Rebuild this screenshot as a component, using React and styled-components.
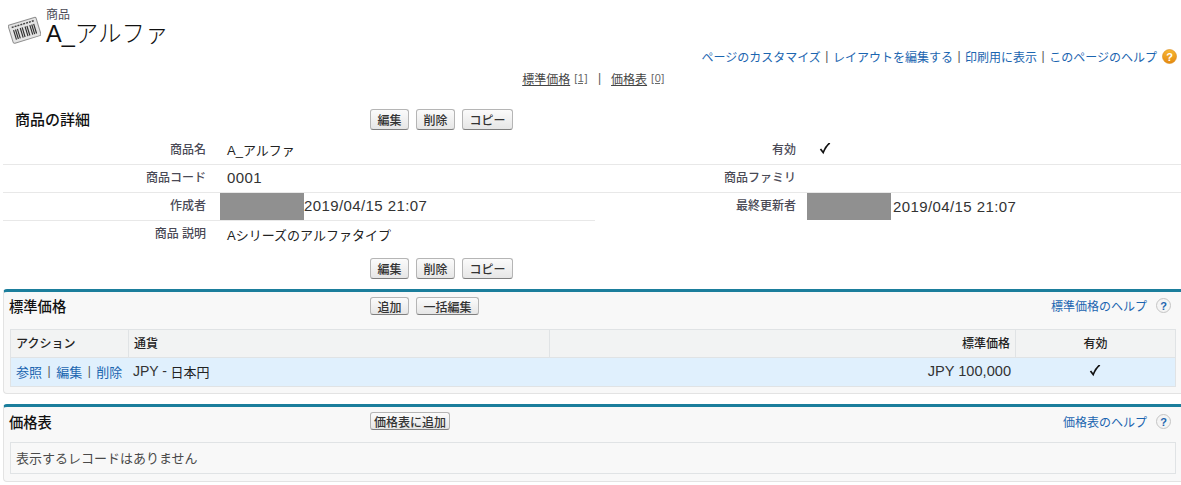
import React from "react";
import styled, { createGlobalStyle } from "styled-components";

const FONT = `"Liberation Sans", "Noto Sans CJK JP", sans-serif`;

const Global = createGlobalStyle`
  html, body {
    margin: 0;
    background: #fff;
    font-family: ${FONT};
    font-size: 12px;
    color: #222;
  }
`;

const Page = styled.div`
  width: 1181px;
  height: 485px;
  overflow: hidden;
`;

const PageHeader = styled.div`
  display: flex;
  justify-content: space-between;
  align-items: flex-start;
  height: 69px;
`;

const TitleBlock = styled.div`
  display: flex;
  padding: 8px 0 0 8px;
`;

const TitleText = styled.div`
  margin-left: 5px;
`;

const Crumb = styled.div`
  font-size: 12px;
  line-height: 14px;
  color: #4a4a56;
`;

const BigTitle = styled.div`
  font-size: 23.5px;
  line-height: 25px;
  font-weight: 300;
  color: #111;
`;

const TopLinks = styled.div`
  display: flex;
  align-items: center;
  margin-top: 47px;
  padding-right: 4px;
  height: 18px;
`;

const A = styled.span`
  color: ${(p) => (p.$plain ? "#444" : "#1b65b0")};
  font-size: ${(p) => p.$size || 12}px;
  white-space: nowrap;
  text-decoration: ${(p) => (p.$line ? "underline" : "none")};
`;

const Pipe = styled.span`
  color: #555;
  margin: 0 ${(p) => p.$gap || 4.5}px;
  font-size: 12px;
`;

const JumpLinks = styled.div`
  display: flex;
  justify-content: center;
  align-items: center;
  height: 18px;
  padding-left: 6px;
  margin-bottom: 22px;
`;

const JumpCount = styled.span`
  font-size: 11px;
  margin-left: 4px;
  letter-spacing: 0.5px;
  color: #666;
  text-decoration: underline;
`;

const Detail = styled.div`
  margin-left: 3px;
`;

const ButtonRow = styled.div`
  display: flex;
  align-items: flex-start;
  box-sizing: border-box;
  height: ${(p) => p.$h}px;
  padding-top: ${(p) => p.$pt || 0}px;
`;

const DetailTitle = styled.div`
  width: 367px;
  padding-left: 12px;
  box-sizing: border-box;
  font-size: 15px;
  line-height: 21px;
  font-weight: 500;
  color: #111;
`;

const Buttons = styled.div`
  display: flex;
  gap: ${(p) => p.$gap || 7}px;
  padding-left: ${(p) => p.$left || 0}px;
`;

const Btn = styled.button`
  box-sizing: border-box;
  height: ${(p) => p.$h || 21}px;
  width: ${(p) => p.$w}px;
  padding: 0;
  font-family: ${FONT};
  font-size: 12px;
  font-weight: 500;
  color: #333;
  background: linear-gradient(#fbfbfb, #e6e6e6);
  border: 1px solid #b5b5b5;
  border-bottom-color: #7f7f7f;
  border-radius: 3px;
`;

const Row = styled.div`
  display: grid;
  grid-template-columns: 592px 586px;
`;

const Cell = styled.div`
  display: flex;
  align-items: center;
  height: 28px;
  box-sizing: border-box;
  border-bottom: ${(p) => (p.$noline ? "none" : "1px solid #e8e8e8")};
`;

const Label = styled.div`
  width: ${(p) => p.$w}px;
  padding-bottom: 5px;
  text-align: right;
  font-size: 12px;
  font-weight: 500;
  color: #4a4a56;
`;

const Value = styled.div`
  display: flex;
  align-items: center;
  box-sizing: border-box;
  height: 100%;
  padding-left: ${(p) => p.$pad}px;
  padding-bottom: 2px;
  font-size: 13px;
  color: #222;
`;

const Num = styled.span`
  font-size: ${(p) => p.$size || 15}px;
  letter-spacing: ${(p) => p.$spacing || 0}px;
  color: #333;
`;

const Redact = styled.div`
  align-self: flex-start;
  width: 84px;
  height: 27px;
  background: #909090;
  margin-left: ${(p) => p.$ml}px;
  margin-right: ${(p) => p.$mr || 0}px;
`;

const Panel = styled.div`
  box-sizing: border-box;
  margin-left: 3px;
  height: ${(p) => p.$h}px;
  margin-top: ${(p) => p.$top}px;
  background: #f8f8f8;
  border-top: 3px solid #1b7e9c;
  border-left: 1px solid #e3e3e3;
  border-bottom: 1px solid #e3e3e3;
  border-radius: 4px 0 0 4px;
  padding-left: 6px;
`;

const PanelHead = styled.div`
  display: flex;
  align-items: center;
  height: ${(p) => p.$h}px;
  margin-left: -1px;
  margin-bottom: ${(p) => p.$mb}px;
`;

const PanelTitle = styled.div`
  width: 361px;
  font-size: 14.3px;
  font-weight: 500;
  color: #111;
`;

const HelpLink = styled.div`
  margin-left: auto;
  display: flex;
  align-items: center;
  padding-right: 10px;
`;

const Grid = styled.div`
  box-sizing: border-box;
  width: 1166px;
  border: 1px solid #e0e3e5;
`;

const HeadRow = styled.div`
  display: grid;
  grid-template-columns: 118px 421px 466px 1fr;
  height: 27px;
  background: #f2f3f3;
  border-bottom: 1px solid #e0e3e5;
`;

const Th = styled.div`
  display: flex;
  align-items: center;
  justify-content: ${(p) => p.$align || "flex-start"};
  padding: 0 5px 2px;
  font-size: 12px;
  font-weight: 500;
  color: #222;
  box-sizing: border-box;
  border-right: ${(p) => (p.$last ? "none" : "1px solid #e0e3e5")};
`;

const BodyRow = styled.div`
  display: grid;
  grid-template-columns: 118px 421px 466px 1fr;
  height: 28px;
  background: #e0f0fd;
`;

const Td = styled.div`
  display: flex;
  align-items: center;
  justify-content: ${(p) => p.$align || "flex-start"};
  padding: 0 5px 2px ${(p) => p.$left || 5}px;
  font-size: 13px;
  white-space: nowrap;
  box-sizing: border-box;
`;

const Empty = styled.div`
  box-sizing: border-box;
  width: 1166px;
  height: 32px;
  line-height: 31px;
  padding-left: 5px;
  border: 1px solid #e0e3e5;
  font-size: 13px;
  color: #4a4a4a;
`;

const Barcode = () => (
  <svg width="33" height="28" viewBox="0 0 33 28" style={{ marginTop: 8 }}>
    <g transform="rotate(-17 16 14)">
      <rect x="2" y="5" width="29" height="19" rx="1.5" fill="#e4e4e4" stroke="#8f8f8f" />
      <path d="M5 8h23" stroke="#444" strokeWidth="1.5" strokeDasharray="2 1" />
      <path
        d="M6 11v10M8 11v10M10 11v10M13 11v10M15 11v10M18 11v10M20 11v10M23 11v10M25 11v10M27 11v10"
        stroke="#333"
        strokeWidth="1.2"
      />
    </g>
  </svg>
);

const HelpOrange = () => (
  <svg width="15" height="15" viewBox="0 0 15 15" style={{ marginLeft: 5 }}>
    <defs>
      <linearGradient id="orangeFill" x1="0" y1="0" x2="0" y2="1">
        <stop offset="0" stopColor="#f7b733" />
        <stop offset="1" stopColor="#e58a10" />
      </linearGradient>
    </defs>
    <circle cx="7.5" cy="7.5" r="7" fill="url(#orangeFill)" stroke="#d98a1a" strokeWidth="0.6" />
    <text x="7.5" y="11.5" textAnchor="middle" fontSize="11" fontWeight="700" fill="#fff" fontFamily="Liberation Sans">?</text>
  </svg>
);

const HelpGray = () => (
  <svg width="15" height="15" viewBox="0 0 15 15" style={{ marginLeft: 9 }}>
    <circle cx="7.5" cy="7.5" r="7" fill="#f4f4f4" stroke="#c4c4c4" />
    <text x="7.5" y="11.5" textAnchor="middle" fontSize="11" fontWeight="700" fill="#1b65b0" fontFamily="Liberation Sans">?</text>
  </svg>
);

const Check = () => (
  <svg width="12" height="13" viewBox="0 0 12 13" style={{ marginLeft: -1 }}>
    <path d="M1.5 6 L4.2 9.5 C6 5 8 2 10.8 0" fill="none" stroke="#111" strokeWidth="1.7" />
  </svg>
);

const App = () => {
  return (
    <Page>
      <Global />
      <PageHeader>
        <TitleBlock>
          <Barcode />
          <TitleText>
            <Crumb>商品</Crumb>
            <BigTitle>A_アルファ</BigTitle>
          </TitleText>
        </TitleBlock>
        <TopLinks>
          <A>ページのカスタマイズ</A>
          <Pipe>|</Pipe>
          <A>レイアウトを編集する</A>
          <Pipe>|</Pipe>
          <A>印刷用に表示</A>
          <Pipe>|</Pipe>
          <A>このページのヘルプ</A>
          <HelpOrange />
        </TopLinks>
      </PageHeader>

      <JumpLinks>
        <A $plain $line>標準価格</A>
        <JumpCount>[1]</JumpCount>
        <Pipe $gap={10}>|</Pipe>
        <A $plain $line>価格表</A>
        <JumpCount>[0]</JumpCount>
      </JumpLinks>

      <Detail>
        <ButtonRow $h={28}>
          <DetailTitle>商品の詳細</DetailTitle>
          <Buttons>
            <Btn $w={39}>編集</Btn>
            <Btn $w={39}>削除</Btn>
            <Btn $w={51}>コピー</Btn>
          </Buttons>
        </ButtonRow>
        <Row>
          <Cell>
            <Label $w={203}>商品名</Label>
            <Value $pad={21}>A_アルファ</Value>
          </Cell>
          <Cell>
            <Label $w={201}>有効</Label>
            <Value $pad={24}><Check /></Value>
          </Cell>
        </Row>
        <Row>
          <Cell>
            <Label $w={203}>商品コード</Label>
            <Value $pad={21}><Num $spacing={0.4}>0001</Num></Value>
          </Cell>
          <Cell>
            <Label $w={201}>商品ファミリ</Label>
          </Cell>
        </Row>
        <Row>
          <Cell>
            <Label $w={203}>作成者</Label>
            <Value $pad={21}>
              <Redact $ml={-7} />
              <Num $spacing={0.4}>2019/04/15 21:07</Num>
            </Value>
          </Cell>
          <Cell $noline>
            <Label $w={201}>最終更新者</Label>
            <Value $pad={24}>
              <Redact $ml={-13} $mr={2} />
              <Num $spacing={0.4}>2019/04/15 21:07</Num>
            </Value>
          </Cell>
        </Row>
        <Row>
          <Cell $noline>
            <Label $w={203}>商品 説明</Label>
            <Value $pad={21}>Aシリーズのアルファタイプ</Value>
          </Cell>
        </Row>
        <ButtonRow $h={34} $pt={9}>
          <Buttons $left={367}>
            <Btn $w={39}>編集</Btn>
            <Btn $w={39}>削除</Btn>
            <Btn $w={51}>コピー</Btn>
          </Buttons>
        </ButtonRow>
      </Detail>

      <Panel $top={6} $h={105}>
        <PanelHead $h={27} $mb={10}>
          <PanelTitle>標準価格</PanelTitle>
          <Buttons>
            <Btn $w={39} $h={18}>追加</Btn>
            <Btn $w={63} $h={18}>一括編集</Btn>
          </Buttons>
          <HelpLink>
            <A>標準価格のヘルプ</A>
            <HelpGray />
          </HelpLink>
        </PanelHead>
        <Grid>
          <HeadRow>
            <Th>アクション</Th>
            <Th>通貨</Th>
            <Th $align="flex-end">標準価格</Th>
            <Th $last $align="center">有効</Th>
          </HeadRow>
          <BodyRow>
            <Td>
              <A $size={13}>参照</A>
              <Pipe $gap={5.5}>|</Pipe>
              <A $size={13}>編集</A>
              <Pipe $gap={5.5}>|</Pipe>
              <A $size={13}>削除</A>
            </Td>
            <Td $left={4}><Num $size={14}>JPY - </Num>&nbsp;日本円</Td>
            <Td $align="flex-end"><Num $size={14.6}>JPY 100,000</Num></Td>
            <Td $align="center"><Check /></Td>
          </BodyRow>
        </Grid>
      </Panel>

      <Panel $top={10} $h={78}>
        <PanelHead $h={28} $mb={7}>
          <PanelTitle>価格表</PanelTitle>
          <Buttons>
            <Btn $w={80} $h={18}>価格表に追加</Btn>
          </Buttons>
          <HelpLink>
            <A>価格表のヘルプ</A>
            <HelpGray />
          </HelpLink>
        </PanelHead>
        <Empty>表示するレコードはありません</Empty>
      </Panel>
    </Page>
  );
};

export default App;
